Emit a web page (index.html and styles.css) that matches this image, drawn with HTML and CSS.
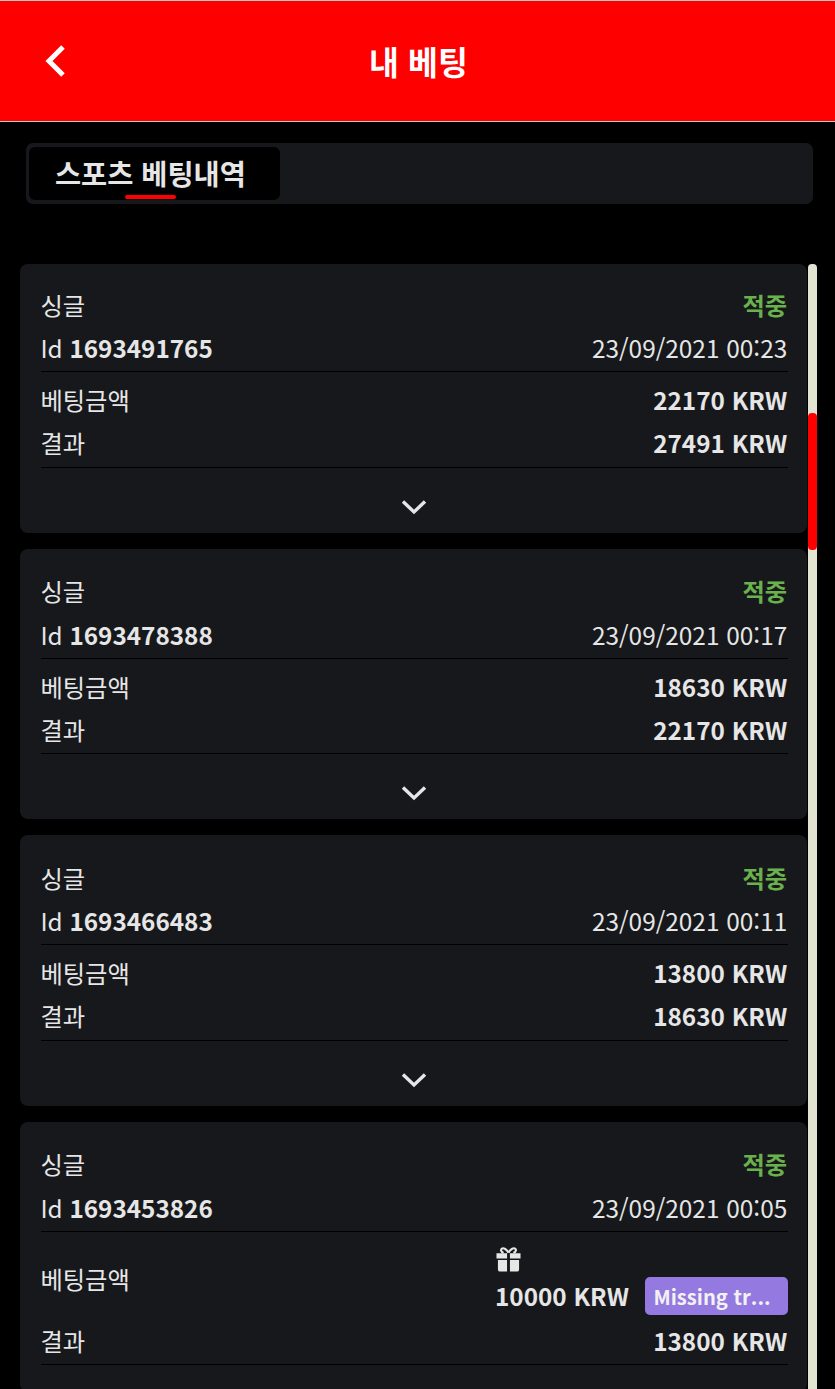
FILE: index.html
```html
<!DOCTYPE html>
<html lang="ko">
<head>
<meta charset="utf-8">
<title>내 베팅</title>
<link rel="stylesheet" href="styles.css">
</head>
<body>
<header class="topbar">
  <svg class="back" viewBox="0 0 22 34" width="22" height="34"><path d="M19 3 L5 17 L19 31" fill="none" stroke="#fff" stroke-width="5"/></svg>
  <h1 class="title">내 베팅</h1>
</header>
<main class="content">
  <nav class="tabs"><div class="tab">스포츠 베팅내역<span class="tab-line"></span></div></nav>
  <div class="list">
    <section class="card card-a">
      <div class="row"><span>싱글</span><b class="won">적중</b></div>
      <div class="row id ruled"><span>Id <b>1693491765</b></span><span class="date">23/09/2021 00:23</span></div>
      <div class="row stake"><span>베팅금액</span><b>22170 KRW</b></div>
      <div class="row result ruled"><span>결과</span><b>27491 KRW</b></div>
      <div class="more"><svg viewBox="0 0 28 18" width="28" height="18"><path d="M3 3.500 L14 14 L25 3.500" fill="none" stroke="#e6e6e6" stroke-width="3.400"/></svg></div>
    </section>
    <section class="card card-b">
      <div class="row"><span>싱글</span><b class="won">적중</b></div>
      <div class="row id ruled"><span>Id <b>1693478388</b></span><span class="date">23/09/2021 00:17</span></div>
      <div class="row stake"><span>베팅금액</span><b>18630 KRW</b></div>
      <div class="row result ruled"><span>결과</span><b>22170 KRW</b></div>
      <div class="more"><svg viewBox="0 0 28 18" width="28" height="18"><path d="M3 3.500 L14 14 L25 3.500" fill="none" stroke="#e6e6e6" stroke-width="3.400"/></svg></div>
    </section>
    <section class="card card-c">
      <div class="row"><span>싱글</span><b class="won">적중</b></div>
      <div class="row id ruled"><span>Id <b>1693466483</b></span><span class="date">23/09/2021 00:11</span></div>
      <div class="row stake"><span>베팅금액</span><b>13800 KRW</b></div>
      <div class="row result ruled"><span>결과</span><b>18630 KRW</b></div>
      <div class="more"><svg viewBox="0 0 28 18" width="28" height="18"><path d="M3 3.500 L14 14 L25 3.500" fill="none" stroke="#e6e6e6" stroke-width="3.400"/></svg></div>
    </section>
    <section class="card card-b">
      <div class="row"><span>싱글</span><b class="won">적중</b></div>
      <div class="row id ruled"><span>Id <b>1693453826</b></span><span class="date">23/09/2021 00:05</span></div>
      <div class="row stake bonus-row"><span>베팅금액</span>
        <div class="bonus">
          <svg class="gift" viewBox="0 0 26 26" width="25" height="25"><path fill="#e6e6e6" d="M0.500 6.500h11v5.500h-11zM14.500 6.500h11v5.500h-11zM2 13.500h9.500V25.500H4a2 2 0 0 1-2-2zM14.500 13.500H24v10a2 2 0 0 1-2 2h-7.500z"/><path fill="none" stroke="#e6e6e6" stroke-width="2.200" d="M13 6C11 2 8 1 6.500 1.500 4.500 2.300 5 5.500 8 6M13 6c2-4 5-5 6.500-4.500 2 .8 1.500 4-1.500 4.500"/></svg>
          <div class="bonus-line"><b>10000 KRW</b><b class="tag">Missing tr...</b></div>
        </div>
      </div>
      <div class="row result ruled"><span>결과</span><b>13800 KRW</b></div>
    </section>
  </div>
</main>
<div class="scroll-track"><div class="scroll-thumb"></div></div>
</body>
</html>
```
FILE: styles.css
```css
* { box-sizing: border-box; }
html, body { margin: 0; height: 100%; }
body {
  background: #000;
  color: #e6e6e6;
  font-family: "Noto Sans CJK KR", "Noto Sans", sans-serif;
  font-size: 24.300px;
  height: 1389px;
  overflow: hidden;
  position: relative;
}
.topbar {
  height: 122px;
  background: #f00;
  border-top: 1px solid #c8c8c8;
  border-bottom: 1px solid #c8c8c8;
  display: flex;
  align-items: center;
  justify-content: center;
  position: relative;
}
.back { position: absolute; left: 44px; top: 43px; }
.title { margin: 0 0 0 2px; color: #fff; font-size: 32.500px; font-weight: 700; line-height: 1; }
.content { padding: 21px 28px 0 20px; }
.tabs {
  margin: 0 -6px 0 6px;
  height: 61px;
  background: #16181c;
  border-radius: 7px;
  padding: 4px 3px;
}
.tab {
  width: 251px;
  height: 53px;
  background: #000;
  border-radius: 6px;
  font-size: 28.400px;
  font-weight: 700;
  line-height: 51px;
  padding-left: 26px;
  position: relative;
}
.tab-line {
  position: absolute;
  left: 96px;
  top: 48px;
  width: 51px;
  height: 4px;
  border-radius: 2px;
  background: #f00;
}
.list { margin-top: 60px; display: flex; flex-direction: column; gap: 16px; }
.card {
  background: #16181c;
  border-radius: 8px;
  padding: 19px 19px 0 21px;
}
.card-a { height: 269px; }
.card-b { height: 270px; padding-top: 20px; }
.card-c { height: 271px; padding-top: 21px; }
.row {
  display: flex;
  justify-content: space-between;
  align-items: center;
  height: 44px;
  line-height: 44px;
  padding-right: 0.800px;
  text-indent: -0.600px;
}
.row b { font-weight: 700; }
.row.ruled { border-bottom: 1px solid #000; padding-bottom: 2px; }
.date { font-size: 24.400px; }
.row.id { height: 45px; }
.row.stake { height: 43px; margin-top: 6px; }
.row.result { height: 47px; }
.card-b .row.id { height: 46px; }
.card-b .row.result { height: 46px; }
.won { color: #6ab04c; }
.more { display: flex; justify-content: center; margin-top: 30px; padding-right: 2px; }
.row.bonus-row { height: 81px; padding-right: 0; }
.bonus { display: flex; flex-direction: column; align-items: flex-start; gap: 5px; align-self: flex-start; margin-top: 9px; }
.gift { display: block; }
.bonus-line { display: flex; align-items: center; gap: 16px; line-height: 38px; }
.tag {
  width: 143px;
  height: 38px;
  background: #9479e0;
  color: #f2f2f2;
  border-radius: 5px;
  padding-left: 9px;
  font-size: 20.200px;
  line-height: 39px;
}
.scroll-track {
  position: absolute;
  left: 808px;
  top: 264px;
  bottom: 0;
  width: 9px;
  background: #e2e3d0;
  border-radius: 4px 4px 0 0;
}
.scroll-thumb {
  position: absolute;
  left: 0;
  top: 149px;
  width: 9px;
  height: 137px;
  background: #f00;
  border-radius: 4px;
}
```
